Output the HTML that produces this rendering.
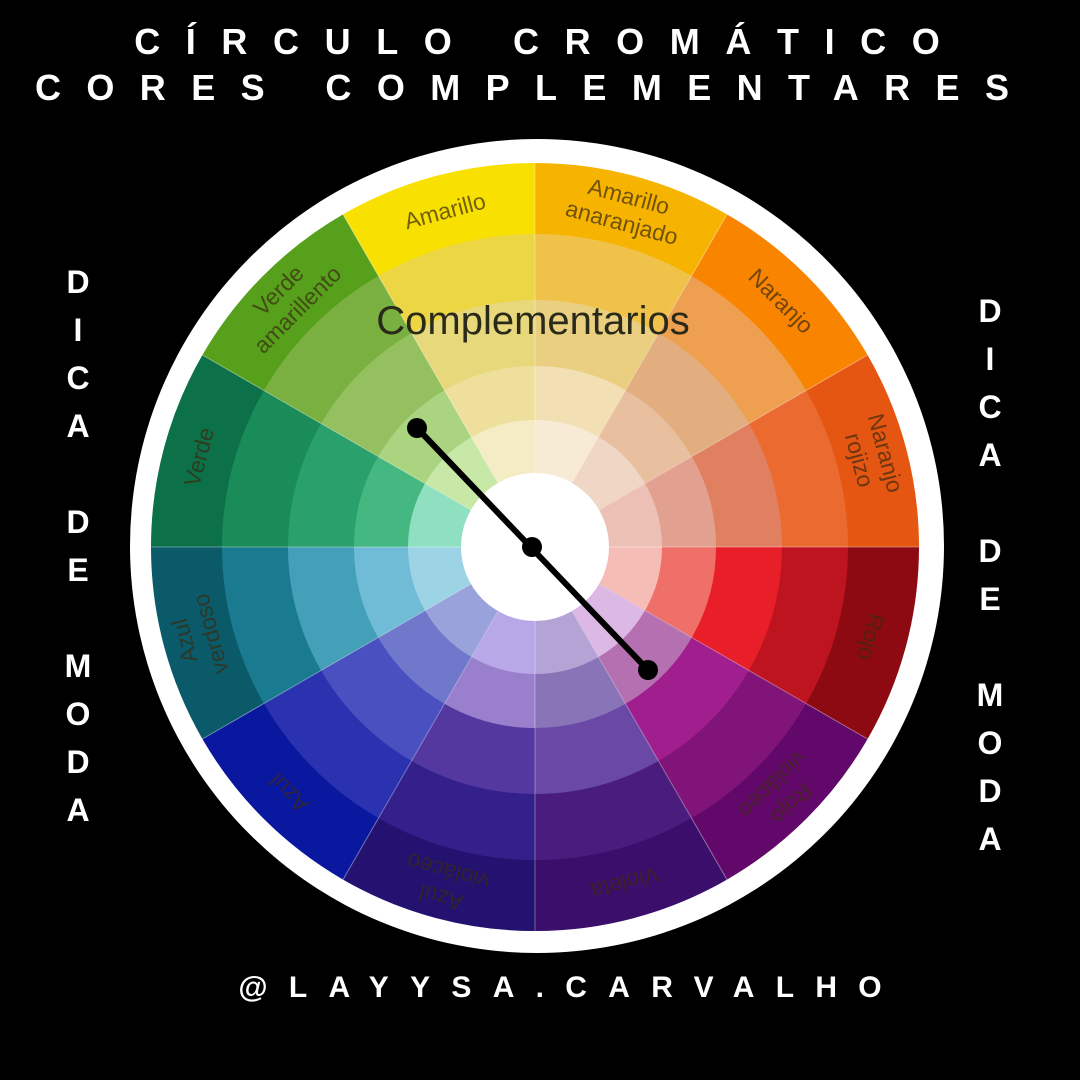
<!DOCTYPE html>
<html><head><meta charset="utf-8"><style>
html,body{margin:0;padding:0;background:#000;}
body{width:1080px;height:1080px;position:relative;overflow:hidden;font-family:"Liberation Sans",sans-serif;}
.t{position:absolute;left:0;width:1080px;text-align:center;color:#fff;font-weight:bold;}
.v{position:absolute;color:#fff;font-weight:bold;font-size:32px;width:40px;text-align:center;line-height:48px;}
</style></head><body>
<div class="t" style="top:21px;left:-3px;font-size:36px;letter-spacing:25.6px;text-indent:25.6px;">CÍRCULO CROMÁTICO</div>
<div class="t" style="top:67px;left:-18px;font-size:36px;letter-spacing:25.4px;text-indent:25.4px;">CORES COMPLEMENTARES</div>
<div class="t" style="top:971px;left:20px;font-size:30px;letter-spacing:21.3px;text-indent:21.3px;">@LAYYSA.CARVALHO</div>
<div class="v" style="left:58px;top:258px;">D<br>I<br>C<br>A<br>&nbsp;<br>D<br>E<br>&nbsp;<br>M<br>O<br>D<br>A</div>
<div class="v" style="left:970px;top:287px;">D<br>I<br>C<br>A<br>&nbsp;<br>D<br>E<br>&nbsp;<br>M<br>O<br>D<br>A</div>
<svg width="1080" height="1080" style="position:absolute;left:0;top:0" xmlns="http://www.w3.org/2000/svg">
<circle cx="537" cy="546" r="407" fill="#fff"/>
<g id="w"></g>
<circle cx="535" cy="547" r="74" fill="#fff"/>
<g font-family="Liberation Sans,sans-serif" font-size="23" fill="#3a2a10" fill-opacity="0.7" text-anchor="middle">
<text transform="translate(535,547) rotate(-15) translate(0,-340)">Amarillo</text>
<text transform="translate(535,547) rotate(15) translate(0,-355)">Amarillo</text>
<text transform="translate(535,547) rotate(15) translate(0,-328)">anaranjado</text>
<text transform="translate(535,547) rotate(45) translate(0,-340)">Naranjo</text>
<text transform="translate(535,547) rotate(75) translate(0,-355)">Naranjo</text>
<text transform="translate(535,547) rotate(75) translate(0,-328)">rojizo</text>
<text transform="translate(535,547) rotate(105) translate(0,-340)">Rojo</text>
<text transform="translate(535,547) rotate(135) translate(0,-355)">Rojo</text>
<text transform="translate(535,547) rotate(135) translate(0,-328)">violáceo</text>
<text transform="translate(535,547) rotate(165) translate(0,-340)">Violeta</text>
<text transform="translate(535,547) rotate(195) translate(0,-355)">Azul</text>
<text transform="translate(535,547) rotate(195) translate(0,-328)">violáceo</text>
<text transform="translate(535,547) rotate(225) translate(0,-340)">Azul</text>
<text transform="translate(535,547) rotate(255) translate(0,-355)">Azul</text>
<text transform="translate(535,547) rotate(255) translate(0,-328)">verdoso</text>
<text transform="translate(535,547) rotate(285) translate(0,-340)">Verde</text>
<text transform="translate(535,547) rotate(315) translate(0,-355)">Verde</text>
<text transform="translate(535,547) rotate(315) translate(0,-328)">amarillento</text>
</g>
<text x="533" y="334" font-family="Liberation Sans,sans-serif" font-size="40" fill="#2a2a1a" text-anchor="middle">Complementarios</text>
<line x1="417" y1="428" x2="648" y2="670" stroke="#000" stroke-width="6"/>
<circle cx="417" cy="428" r="10" fill="#000"/>
<circle cx="532" cy="547" r="10" fill="#000"/>
<circle cx="648" cy="670" r="10" fill="#000"/>
</svg>
<script>
var cols=[
['#f6b400','#f0c24a','#ebcf80','#f2e0b4','#f8ebd6'],
['#f88400','#eea050','#e2ae80','#e8c0a0','#f0d6c4'],
['#e45612','#ea6a30','#e08060','#e2a090','#ecc0b4'],
['#8e0a12','#be1420','#e81e28','#ef7068','#f6bcb6'],
['#62086a','#801478','#a01e8e','#b470b0','#dcb8e4'],
['#3a0e6a','#4a1c7e','#6a48a6','#8a74b8','#b4a4d6'],
['#241270','#34208a','#5438a0','#9a80cc','#b8a8e8'],
['#0a18a0','#2a32b0','#4a50c0','#7078cc','#9aa2dc'],
['#0a5a6a','#1a7a90','#44a0b8','#70bcd6','#9cd4e6'],
['#0c7048','#1a8c5a','#2aa06c','#44b880','#8ee0c0'],
['#56a01c','#7ab040','#94c060','#aad480','#c8e8a8'],
['#f8e000','#ecd644','#e8d87c','#eee09c','#f4ecc4']];
var R=[384,313,247,181,127],cx=535,cy=547,s='';
function p(r,a){var t=(a-90)*Math.PI/180;return (cx+r*Math.cos(t)).toFixed(1)+','+(cy+r*Math.sin(t)).toFixed(1);}
for(var i=0;i<12;i++){var a0=i*30,a1=a0+30;for(var j=0;j<5;j++){var r=R[j];
s+='<path d="M'+cx+','+cy+' L'+p(r,a0)+' A'+r+','+r+' 0 0 1 '+p(r,a1)+' Z" fill="'+cols[i][j]+'"/>';}}
for(var i=0;i<12;i++){s+='<line x1="'+cx+'" y1="'+cy+'" x2="'+p(384,i*30).split(',')[0]+'" y2="'+p(384,i*30).split(',')[1]+'" stroke="#fff" stroke-opacity="0.35" stroke-width="1"/>';}
document.getElementById('w').innerHTML=s;
</script>
</body></html>
